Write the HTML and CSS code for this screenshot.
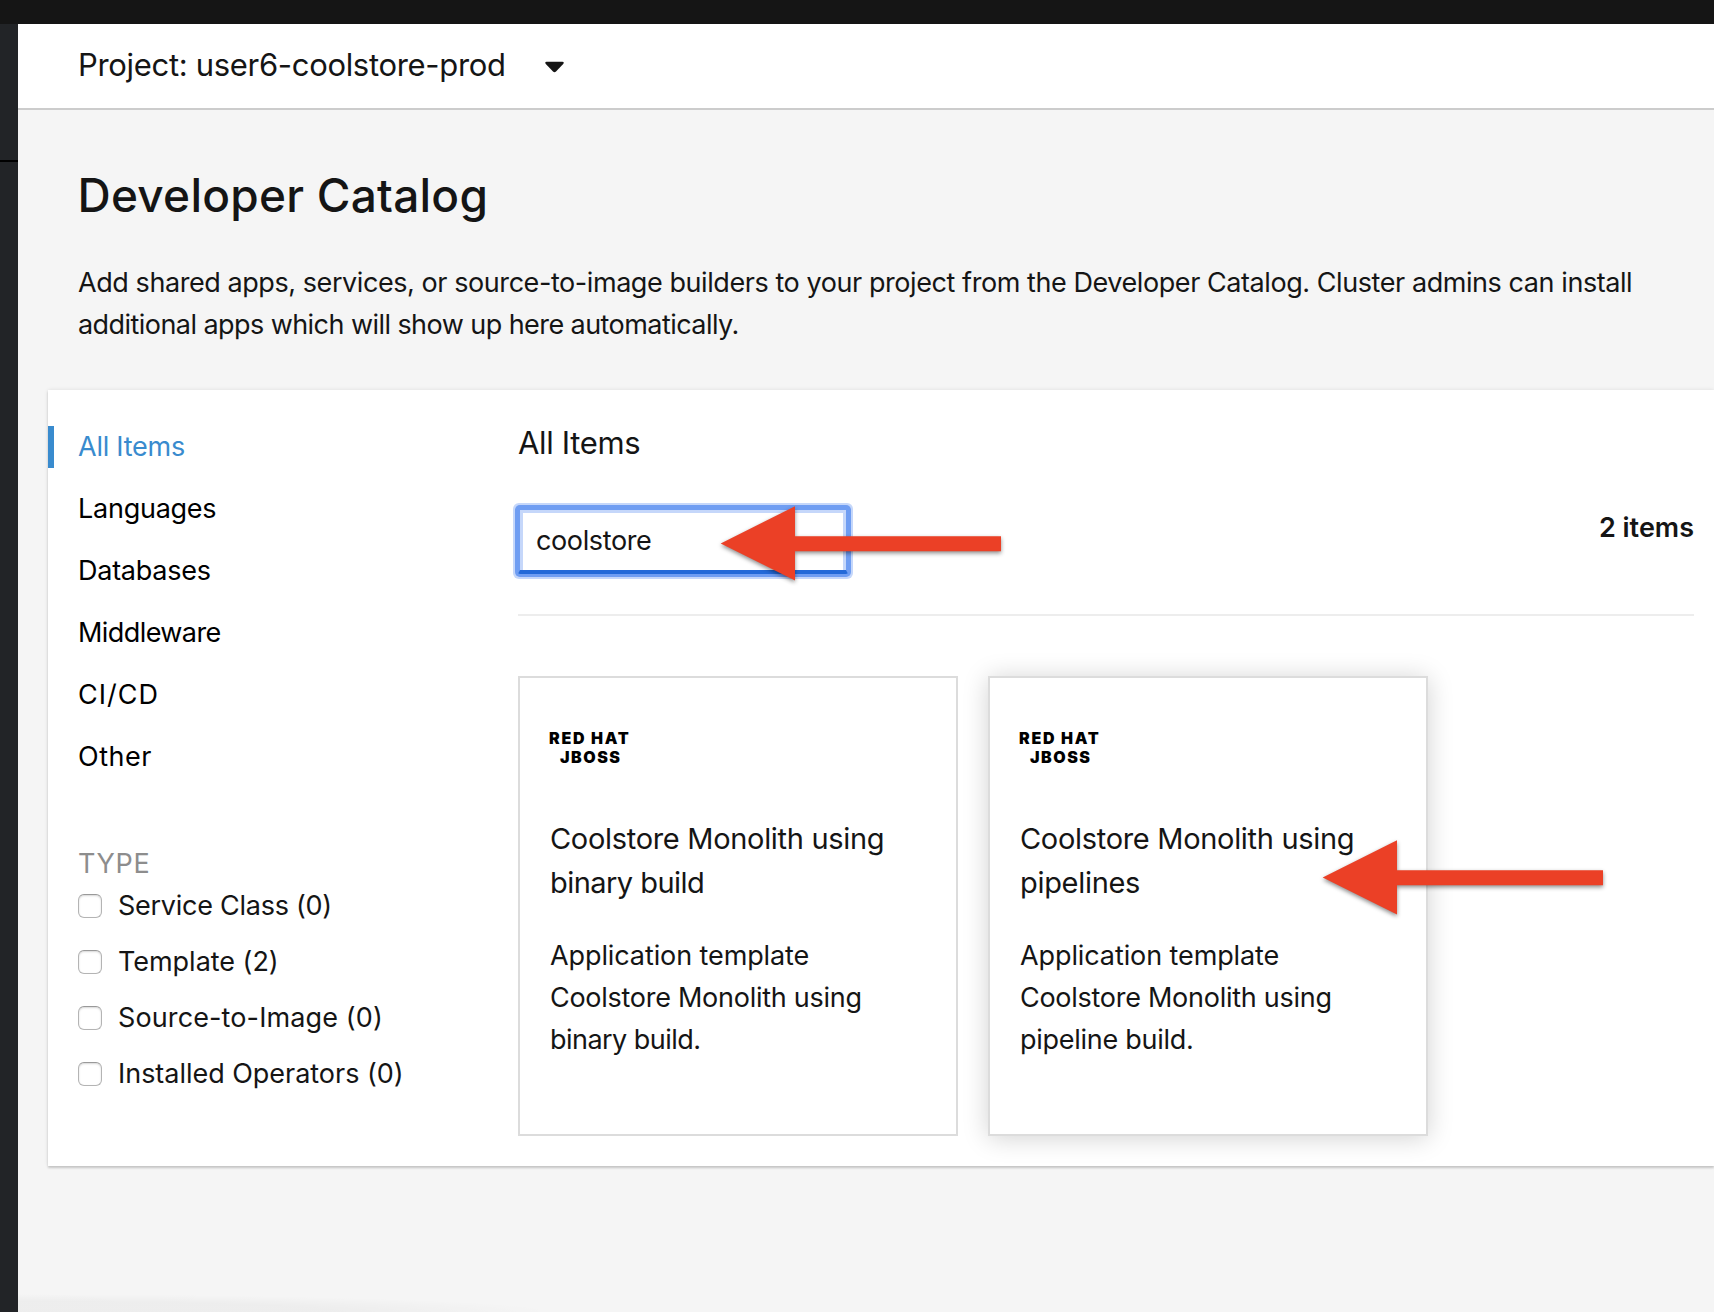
FILE: index.html
```html
<!DOCTYPE html>
<html lang="en">
<head>
<meta charset="utf-8">
<title>Developer Catalog</title>
<link rel="stylesheet" href="styles.css">
</head>
<body>
<header class="masthead"></header>
<div class="shell">
  <aside class="rail"></aside>
  <main class="main">
    <div class="project-bar">
      <span class="project-name">Project: user6-coolstore-prod</span>
      <svg class="caret" width="20" height="12" viewBox="0 0 20 12"><path d="M1.6 0.7H17.4Q19.6 1 18.2 2.9L11 10.5Q9.5 12 8 10.5L0.8 2.9Q-0.6 1 1.6 0.7Z" fill="#151515"/></svg>
    </div>
    <div class="intro">
      <h1 class="page-title">Developer Catalog</h1>
      <p class="lead"><span class="lead-first">Add shared apps, services, or source-to-image builders to your project from the Developer Catalog. Cluster admins can install</span><br>additional apps which will show up here automatically.</p>
    </div>
    <section class="panel">
      <div class="sidebar">
        <nav class="categories">
          <a class="category active">All Items</a>
          <a class="category">Languages</a>
          <a class="category">Databases</a>
          <a class="category tight">Middleware</a>
          <a class="category wide">CI/CD</a>
          <a class="category loose">Other</a>
        </nav>
        <div class="filters">
          <div class="filter-heading">TYPE</div>
          <label class="filter snug"><span class="box"></span>Service Class (0)</label>
          <label class="filter"><span class="box"></span>Template (2)</label>
          <label class="filter airy"><span class="box"></span>Source-to-Image (0)</label>
          <label class="filter"><span class="box"></span>Installed Operators (0)</label>
        </div>
      </div>
      <div class="catalog">
        <h2 class="catalog-title">All Items</h2>
        <div class="toolbar">
          <input class="search" type="text" value="coolstore">
          <span class="count">2 items</span>
          <svg class="arrow arrow-search" width="284" height="80" viewBox="0 0 284 80"><path d="M0.7 39.5L75 2.3V32.2H281V47.2H75V76.5Z" fill="#eb4026"/></svg>
        </div>
        <div class="cards">
          <article class="card">
            <div class="logo"><span class="logo-top">RED HAT</span><span class="logo-bottom">JBOSS</span></div>
            <h3 class="card-title">Coolstore Monolith using<br><span class="tight">binary build</span></h3>
            <p class="card-text"><span class="even">Application template</span><br>Coolstore Monolith using<br><span class="tight">binary build.</span></p>
          </article>
          <article class="card raised">
            <div class="logo"><span class="logo-top">RED HAT</span><span class="logo-bottom">JBOSS</span></div>
            <h3 class="card-title">Coolstore Monolith using<br>pipelines</h3>
            <p class="card-text"><span class="even">Application template</span><br>Coolstore Monolith using<br>pipeline build.</p>
            <svg class="arrow arrow-card" width="284" height="80" viewBox="0 0 284 80"><path d="M0.7 39.5L75 2.3V32.2H281V47.2H75V76.5Z" fill="#eb4026"/></svg>
          </article>
        </div>
      </div>
    </section>
    <div class="status-shade"></div>
  </main>
</div>
</body>
</html>
```
FILE: styles.css
```css
* { box-sizing: border-box; }
body {
  margin: 0;
  height: 1312px;
  overflow: hidden;
  display: flex;
  flex-direction: column;
  background: #f5f5f5;
  color: #151515;
  font: 400 27px/42px Inter, "Liberation Sans", sans-serif;
}
h1, h2, h3, p { margin: 0; font-weight: 400; white-space: nowrap; }

.masthead { height: 24px; flex: none; background: #151515; }
.shell { display: flex; flex: 1; min-height: 0; }
.rail {
  width: 18px;
  flex: none;
  background: linear-gradient(#000, #000) 0 136px / 100% 2px no-repeat #222427;
}
.main { flex: 1; min-width: 0; display: flex; flex-direction: column; }

.project-bar {
  height: 86px;
  padding: 0 0 2px 60px;
  display: flex;
  align-items: center;
  background: #fff;
  border-bottom: 2px solid #ccc;
}
.project-name { font-size: 31px; letter-spacing: -0.32px; width: 467px; white-space: nowrap; }
.caret { margin-top: 3px; }

.intro { padding: 57px 0 44px 60px; }
.page-title {
  font-size: 46px;
  line-height: 56px;
  font-weight: 500;
  letter-spacing: 0.24px;
  margin: 0 0 39px -0.5px;
}
.lead { letter-spacing: -0.56px; }
.lead-first { letter-spacing: -0.43px; }

.panel {
  height: 776px;
  flex: none;
  margin-left: 30px;
  display: flex;
  background: #fff;
  box-shadow: 0 2px 2px rgba(3, 3, 3, 0.16), 0 0 4px rgba(3, 3, 3, 0.1);
}
.sidebar { width: 470px; flex: none; padding-top: 36px; }
.categories { display: flex; flex-direction: column; gap: 20px; }
.category {
  height: 42px;
  line-height: 41px;
  padding-left: 30px;
  color: #000;
  letter-spacing: -0.25px;
}
.category.active {
  border-left: 6px solid #398bce;
  padding-left: 24px;
  color: #398bce;
  letter-spacing: -0.25px;
}
.category.tight { letter-spacing: -0.58px; }
.category.wide { letter-spacing: 1.02px; }
.category.loose { letter-spacing: 0.5px; }

.filters { display: flex; flex-direction: column; gap: 14px; padding: 65px 0 0 30px; }
.filter-heading { color: #8d8d8d; letter-spacing: 0.66px; margin-bottom: -14px; }
.filter { display: flex; align-items: center; gap: 16px; letter-spacing: -0.03px; white-space: nowrap; }
.filter.snug { letter-spacing: -0.26px; }
.filter.airy { letter-spacing: 0.12px; }
.box {
  width: 24px;
  height: 24px;
  border: 1px solid #b4b4b4;
  border-top-color: #999;
  border-radius: 6px;
  background: #fff;
  box-shadow: inset 0 1px 2px rgba(0, 0, 0, 0.16);
}

.catalog { width: 1176px; flex: none; padding-top: 30px; }
.catalog-title { font-size: 31px; line-height: 45px; margin-bottom: 1px; letter-spacing: -0.34px; }
.toolbar {
  position: relative;
  height: 150px;
  display: flex;
  justify-content: space-between;
  padding-top: 42px;
  border-bottom: 2px solid #ededed;
}
.search {
  width: 330px;
  height: 66px;
  margin: 0;
  padding: 0 14px 0 16px;
  border: solid #6f9df2;
  border-width: 2px 2px 4px;
  border-bottom-color: #2369d8;
  border-radius: 2px;
  outline: none;
  background: #fff;
  box-shadow:
    0 0 0 3px #6f9df2,
    0 0 0 5px #c5d7fa,
    inset 0 3px #c5d7fa,
    inset 3px 0 #c5d7fa,
    inset -3px 0 #c5d7fa;
  color: #151515;
  font: inherit;
  letter-spacing: -0.38px;
}
.count { font-weight: 600; line-height: 40px; }

.cards { display: flex; gap: 30px; padding-top: 60px; }
.card {
  position: relative;
  width: 440px;
  height: 460px;
  border: 2px solid #dcdcdc;
  background: #fff;
  padding: 51px 0 0 30px;
}
.card.raised { box-shadow: 0 2px 24px rgba(3, 3, 3, 0.18); }
.logo {
  display: flex;
  flex-direction: column;
  height: 38px;
  margin: 0 0 50px -1px;
  color: #000;
  font-size: 16px;
  line-height: 19px;
  font-weight: 900;
}
.logo-top { letter-spacing: 1.7px; }
.logo-bottom { letter-spacing: 1.5px; padding-left: 11px; }
.card-title { font-size: 29px; line-height: 44px; letter-spacing: -0.31px; margin-bottom: 30px; }
.card-text { letter-spacing: -0.27px; }
.card .tight { letter-spacing: -0.54px; }
.card .even { letter-spacing: -0.1px; }

/* annotation arrows drawn over the content */
.arrow { position: absolute; filter: drop-shadow(0 2px 2px rgba(0, 0, 0, 0.45)); overflow: visible; }
.arrow-search { left: 202px; top: 37.5px; }
.arrow-card { left: 332px; top: 159.5px; }

.status-shade {
  width: 520px;
  height: 18px;
  margin-top: auto;
  background: radial-gradient(ellipse 540px 18px at 0 100%, rgba(0, 0, 0, 0.03) 60%, rgba(0, 0, 0, 0));
}
```
